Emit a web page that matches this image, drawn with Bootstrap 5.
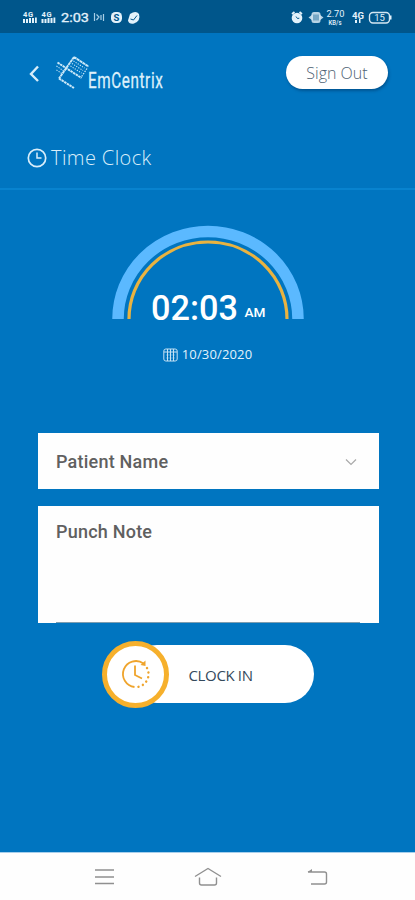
<!DOCTYPE html>
<html lang="en">
<head>
<meta charset="utf-8">
<meta name="viewport" content="width=device-width, initial-scale=1">
<title>EmCentrix Time Clock</title>
<link href="https://cdn.jsdelivr.net/npm/bootstrap@5.3.0/dist/css/bootstrap.min.css" rel="stylesheet">
<style>
  body { background: #0075c0; font-family: "Open Sans", sans-serif; overflow: hidden; }
  svg { display: block; flex: none; overflow: visible; }
  .screen { height: 900px; }
  .status-bar { height: 33px; background: #00568b; padding: 0 23px; }
  .app-header { height: 81px; padding: 0 27px 2px 28px; }
  .btn-signout { width: 102px; height: 33px; font-size: 16px; line-height: 34px; color: #4e6374; font-weight: 300; box-shadow: 1px 2px 3px rgba(0,40,80,.4); }
  .page-title { height: 76px; padding: 14px 27px 0; border-bottom: 2px solid #0883cf; color: #d9eefa; font-size: 20px; font-weight: 300; letter-spacing: .4px; }
  .dial-area { height: 243px; padding-top: 33px; }
  .dial { width: 194px; height: 106px; }
  .date-line { color: #e3f2fb; font-size: 13px; line-height: 18px; margin-top: 16px; gap: 4px; letter-spacing: .15px; }
  .fields { padding: 0 36.5px 0 37.5px; }
  .field-box { font: 500 18px/24px Roboto, sans-serif; color: #606060; background: #fefefe; padding: 0 19px 0 18.5px; letter-spacing: .22px; }
  .field-select { height: 56px; padding-right: 22px; padding-top: 1px; }
  .field-note { height: 117px; margin-top: 17px; padding-top: 14px; }
  .note-line { height: 1px; background: #7d9db0; }
  .btn-clock { width: 212px; height: 66px; margin: 18px 0 0 102px; }
  .clock-knob { width: 67px; height: 67px; border: 5px solid #f6b02c; z-index: 1; }
  .clock-label { width: 186px; height: 58px; margin-left: -41px; padding: 2px 0 0 60.5px; font-size: 15px; color: #34495c; letter-spacing: -.35px; }
  .nav-keys { height: 48px; padding: 0 87px 0 94px; border-top: 1px solid #a7cfec; background: #fefefe; }
  .home-key { margin-left: -6px; }
</style>
</head>
<body>
<main class="screen d-flex flex-column">
  <header class="status-bar d-flex align-items-center justify-content-between">
    <svg width="120" height="20" viewBox="0 0 120 20" fill="#e3f2fb" font-family="Roboto, sans-serif">
      <g id="cell"><text x="0" y="9.5" font-size="7.5" font-weight="700" textLength="10">4G</text><path d="M0 12h2v4H0zM3 12h2v4H3zM6 11h2v5H6zM9 11h2v5H9zM12 10.500h1.800v5.500H12z"/></g>
      <use href="#cell" x="18.500"/>
      <text x="38" y="15" font-size="13.500" font-weight="400" stroke="#e3f2fb" stroke-width=".3" textLength="28" lengthAdjust="spacingAndGlyphs">2:03</text>
      <path d="M71.500 6v8M73.500 7.500l2.500 2.500-2.500 3M78 8v5M80.500 7v7" fill="none" stroke="#a7cee6" stroke-width="1.200"/>
      <rect x="88" y="5" width="11" height="11" rx="4.500"/><text x="93.500" y="13.800" font-size="9.500" font-weight="700" fill="#00568b" text-anchor="middle">S</text>
      <path d="M107 7q6-4 9 0 2 7-5 9.500-5 1-6-3z"/><path d="M107.500 12l3 1 3.500-4.500" fill="none" stroke="#00568b" stroke-width="1"/>
    </svg>
    <svg width="102" height="20" viewBox="0 0 102 20" fill="#e3f2fb" font-family="Roboto, sans-serif">
      <circle cx="7" cy="11" r="5.300"/><path d="M2 7l2.500-2M12 7L9.500 5" stroke="#e3f2fb" stroke-width="1.800"/><path d="M6 9.500l1.500 2 1.800-.3" stroke="#00568b" fill="none"/>
      <path d="M18.500 10.500l4-3v6zM33.500 10.500l-4-3v6z" opacity=".8"/><rect x="21.500" y="5" width="9" height="11" rx="2.500" opacity=".8"/><path d="M24 7.500v6M26 7.500v6M28 7.500v6" stroke="#00568b" stroke-width=".7"/>
      <text x="36.500" y="9.800" font-size="9.500" textLength="18" lengthAdjust="spacingAndGlyphs">2.70</text>
      <text x="38.500" y="18" font-size="6.500" font-weight="500" textLength="13" lengthAdjust="spacingAndGlyphs">KB/s</text>
      <text x="62" y="11.500" font-size="8.500" font-weight="700" textLength="12" lengthAdjust="spacingAndGlyphs">4G</text><path d="M65 13h2v3h-2zM69 12h1.500v4H69z"/>
      <rect x="79.500" y="5.500" width="20" height="10.500" rx="3.500" fill="none" stroke="#d4e7f3" stroke-width="1.400"/><path d="M100 8.500h1.500v4H100z"/>
      <text x="89.500" y="14.200" font-size="9.500" text-anchor="middle">15</text>
    </svg>
  </header>

  <nav class="app-header d-flex align-items-center justify-content-between" aria-label="Account">
    <svg width="140" height="46" viewBox="0 0 140 46" aria-label="EmCentrix">
      <path d="M10 16.500L3 24l7 7" fill="none" stroke="#d8edf9" stroke-width="2.400"/>
      <g fill="none" stroke="#cce9f8">
        <path d="M46 7L31 28.500M46 7l14.500 9.500" stroke-width="1.900" stroke-dasharray="3 .4"/>
        <path d="M29.500 12.500L53.500 28" stroke-width="1.900" stroke-dasharray="2.500 .6"/>
        <path d="M31 28.500l15 9.500" stroke-width="2" stroke-dasharray="2.500 .6"/>
        <path d="M45.500 11l11 7M44 13.500l11 7M42.500 16l11 7" stroke-width="1.100" stroke-dasharray="1.200 1.300"/>
        <path d="M59 18.500l-6 9" stroke-width="1.300" stroke-dasharray="1.500 1.200"/>
        <path d="M28.500 16l8 5.500M28.500 20l6 4" stroke-width="1.100" stroke-dasharray="1.200 1.300"/>
      </g>
      <text transform="translate(60 38) scale(.68 1)" fill="#dcf0fb" stroke="#dcf0fb" stroke-width=".3" font-family="Roboto, sans-serif" font-size="22.500" textLength="110" lengthAdjust="spacing">EmCentrix</text>
    </svg>
    <button type="button" class="btn btn-signout bg-white rounded-pill border-0 p-0">Sign Out</button>
  </nav>

  <h1 class="page-title d-flex align-items-center gap-1 mb-0">
    <svg width="20" height="20" viewBox="0 0 20 20" fill="none" stroke="#d9eefa"><circle cx="10" cy="10" r="8.700" stroke-width="1.700"/><path d="M10 4.500V10h4.500" stroke-width="1.500"/></svg>
    <span>Time Clock</span>
  </h1>

  <section class="dial-area d-flex flex-column align-items-center">
    <svg class="dial" viewBox="0 0 194 106">
      <path d="M7 96A90 87.500 0 0 1 187 96" fill="none" stroke="#5bb9ff" stroke-width="11.500"/>
      <path d="M18 96A79 77 0 0 1 176 96" fill="none" stroke="#e9b340" stroke-width="3.200"/>
      <g fill="#fff" font-family="Roboto, sans-serif" font-weight="500">
        <text x="40" y="96.500" font-size="35" textLength="87" lengthAdjust="spacingAndGlyphs">02:03</text>
        <text x="133.500" y="94" font-size="13" textLength="21" lengthAdjust="spacingAndGlyphs">AM</text>
      </g>
    </svg>
    <div class="date-line d-flex align-items-center">
      <svg width="15" height="15" viewBox="0 0 15 15" fill="none" stroke="#c5e2f4"><rect x=".8" y="2" width="13.400" height="12" rx="2"/><path d="M1 5h13M4.500 2v12M7.500 2v12M10.500 2v12" stroke-width="1"/><path d="M3 8h9M3 11h9" stroke-width=".4"/></svg>
      <span>10/30/2020</span>
    </div>
  </section>

  <form class="flex-grow-1">
    <div class="fields">
      <div class="field-box field-select d-flex align-items-center justify-content-between">
        <span>Patient Name</span>
        <svg width="12" height="8" viewBox="0 0 12 8" fill="none" stroke="#a9a9a9" stroke-width="1.200"><path d="M1 1.500l5 5 5-5"/></svg>
      </div>
      <div class="field-box field-note d-flex flex-column justify-content-between">
        <span>Punch Note</span>
        <div class="note-line"></div>
      </div>
    </div>
    <button type="button" class="btn btn-clock d-flex align-items-center border-0 p-0">
      <span class="clock-knob bg-white rounded-circle d-flex align-items-center justify-content-center flex-shrink-0 position-relative">
        <svg width="30" height="30" viewBox="0 0 30 30" fill="none" stroke="#efa42c" stroke-width="1.800"><path d="M13.500 28A13 13 0 1 1 22.500 4.500M14 6.500V16l7 3.500"/><path d="M24.500 1.500V7l-5-1z" fill="#efa42c" stroke="none"/><path d="M26 9A13 13 0 0 1 16.500 28" stroke-width="2.400" stroke-linecap="round" stroke-dasharray=".1 4.600"/></svg>
      </span>
      <span class="clock-label bg-white rounded-pill d-flex align-items-center flex-shrink-0">CLOCK IN</span>
    </button>
  </form>

  <footer class="nav-keys d-flex align-items-center justify-content-between">
    <svg width="21" height="18" viewBox="0 0 21 18" stroke="#909090" stroke-width="1.500"><path d="M1 2h19M1 9h19M1 15.500h19"/></svg>
    <svg class="home-key" width="28" height="20" viewBox="0 0 28 20" fill="none" stroke="#909090" stroke-width="1.400"><path d="M1 9.500L14 1.500l13 8M5.500 10.500V16q0 2 2 2h13q2 0 2-2v-5.500"/></svg>
    <svg width="21" height="18" viewBox="0 0 21 18" fill="none" stroke="#909090" stroke-width="1.400"><path d="M1 4h16.500q2 0 2 2v8q0 2-2 2H4"/><path d="M5 1L.5 4H5z" fill="#909090" stroke="none"/></svg>
  </footer>
</main>
<script src="https://cdn.jsdelivr.net/npm/bootstrap@5.3.0/dist/js/bootstrap.bundle.min.js"></script>
</body>
</html>
